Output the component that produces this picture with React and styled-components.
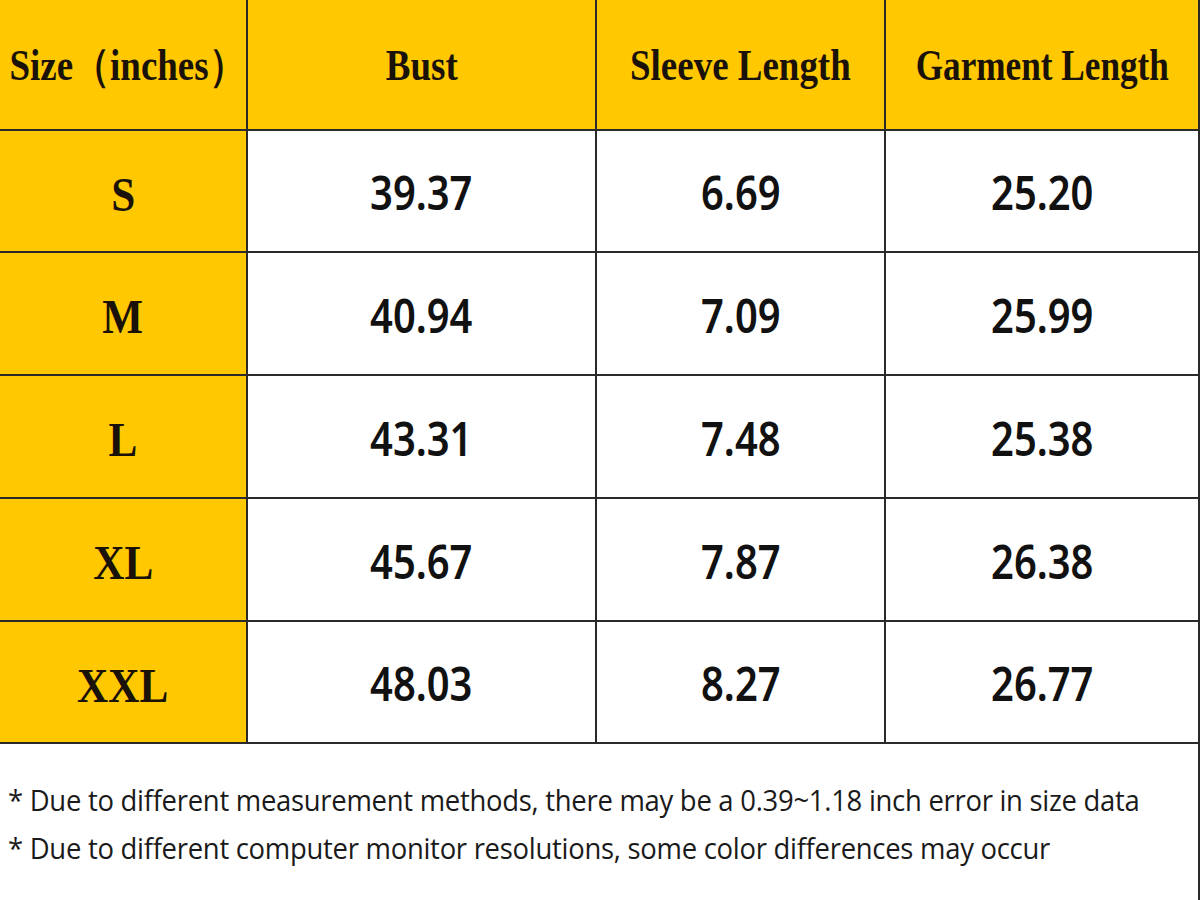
import React from 'react'
import styled, { createGlobalStyle } from 'styled-components'

const GlobalStyle = createGlobalStyle`
    html, body {
        margin: 0;
        padding: 0;
        background: #ffffff;
    }
`

const rows = [
    { size: 'S', bust: '39.37', sleeve: '6.69', length: '25.20' },
    { size: 'M', bust: '40.94', sleeve: '7.09', length: '25.99' },
    { size: 'L', bust: '43.31', sleeve: '7.48', length: '25.38' },
    { size: 'XL', bust: '45.67', sleeve: '7.87', length: '26.38' },
    { size: 'XXL', bust: '48.03', sleeve: '8.27', length: '26.77' },
]

const Page = styled.div`
    width: 1200px;
    height: 900px;
    overflow: hidden;
    background: #fff;
    border-right: 2px solid #2a2a2a;
    box-sizing: border-box;
`

const Table = styled.div`
    display: grid;
    grid-template-columns: 248px 349px 289px 312px;
    grid-template-rows: 131px 122px 123px 123px 123px 122px;
`

const Cell = styled.div`
    display: flex;
    align-items: center;
    justify-content: center;
    box-sizing: border-box;
    border-bottom: 2px solid #2a2a2a;
    border-right: ${p => (p.$last ? 'none' : '2px solid #2a2a2a')};
    background: ${p => (p.$yellow ? '#ffc801' : '#ffffff')};
`

const HeadText = styled.span`
    font-family: 'Liberation Serif', 'Times New Roman', serif;
    font-weight: 700;
    font-size: 44px;
    color: #1a1208;
    display: inline-block;
    transform: scaleX(${p => p.$scale || 0.84});
    white-space: nowrap;
    margin: 2px 0 0 ${p => p.$shift || 0}px;
`

const SizeText = styled(HeadText)`
    font-size: 48px;
    transform: scaleX(0.9);
    margin-top: 6px;
`

const Value = styled.span`
    font-family: 'Noto Sans', sans-serif;
    font-weight: 600;
    font-size: 47px;
    color: #111;
    display: inline-block;
    transform: scaleX(0.85);
    margin-top: 2px;
`

const Notes = styled.div`
    padding: 32px 0 0 8px;
    display: flex;
    flex-direction: column;
`

const Note = styled.p`
    margin: 0;
    font-family: 'Open Sans', sans-serif;
    font-size: 30px;
    line-height: 48px;
    color: #1a1a1a;
    white-space: nowrap;
    display: inline-block;
    transform: scaleX(0.915);
    transform-origin: left center;
    letter-spacing: -0.3px;
`

export default function App() {
    return (
        <Page>
            <GlobalStyle />
            <Table>
                <Cell $yellow>
                    <HeadText $shift={10}>Size（inches）</HeadText>
                </Cell>
                <Cell $yellow>
                    <HeadText>Bust</HeadText>
                </Cell>
                <Cell $yellow>
                    <HeadText>Sleeve Length</HeadText>
                </Cell>
                <Cell $yellow $last>
                    <HeadText $scale={0.8}>Garment Length</HeadText>
                </Cell>
                {rows.map(row => (
                    <React.Fragment key={row.size}>
                        <Cell $yellow>
                            <SizeText>{row.size}</SizeText>
                        </Cell>
                        <Cell>
                            <Value>{row.bust}</Value>
                        </Cell>
                        <Cell>
                            <Value>{row.sleeve}</Value>
                        </Cell>
                        <Cell $last>
                            <Value>{row.length}</Value>
                        </Cell>
                    </React.Fragment>
                ))}
            </Table>
            <Notes>
                <Note>* Due to different measurement methods, there may be a 0.39~1.18 inch error in size data</Note>
                <Note>* Due to different computer monitor resolutions, some color differences may occur</Note>
            </Notes>
        </Page>
    )
}
